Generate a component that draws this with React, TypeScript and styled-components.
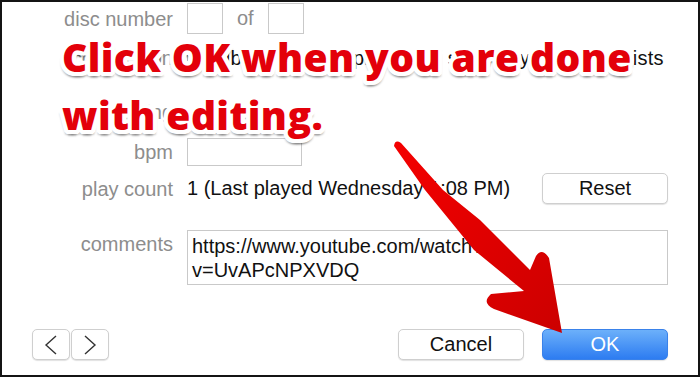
import React from 'react';
import styled, { createGlobalStyle } from 'styled-components';

const GlobalStyle = createGlobalStyle`
  html, body {
    margin: 0;
    padding: 0;
    background: #fff;
  }
  body {
    font-family: 'Liberation Sans', Arial, sans-serif;
    font-size: 20px;
    color: #111;
  }
`;

const Frame = styled.div`
  position: relative;
  box-sizing: border-box;
  width: 700px;
  height: 377px;
  border: 2px solid #141414;
  background: #fff;
  overflow: hidden;
`;

const Form = styled.div`
  display: flex;
  flex-direction: column;
  padding-right: 30px;
`;

const Row = styled.div<{ top: number; h: number; alignTop?: boolean }>`
  display: grid;
  grid-template-columns: 171px 1fr auto;
  column-gap: 14px;
  align-items: ${(p) => (p.alignTop ? 'start' : 'center')};
  height: ${(p) => p.h}px;
  margin-top: ${(p) => p.top}px;
`;

const Label = styled.div<{ padTop?: number }>`
  text-align: right;
  color: #8d8d8d;
  line-height: 24px;
  padding-top: ${(p) => p.padTop || 0}px;
  white-space: nowrap;
`;

const Value = styled.div`
  display: flex;
  align-items: center;
  gap: 14px;
  white-space: nowrap;
  color: #111;
`;

const Note = styled.span`
  letter-spacing: 0.3px;
`;

const Field = styled.div<{ w: number; h: number }>`
  box-sizing: border-box;
  width: ${(p) => p.w}px;
  height: ${(p) => p.h}px;
  border: 1px solid #c9c9c9;
  background: #fff;
`;

const Of = styled.span`
  color: #8d8d8d;
`;

const Check = styled.span`
  box-sizing: border-box;
  width: 16px;
  height: 16px;
  border: 1px solid #b0b0b0;
  border-radius: 3px;
  margin-right: -5px;
`;

const TextBox = styled.div`
  box-sizing: border-box;
  height: 55px;
  border: 1px solid #c9c9c9;
  padding: 3px 0 0 4px;
  line-height: 24px;
  grid-column: 2 / 4;
`;

const Button = styled.button<{ primary?: boolean; w?: number }>`
  box-sizing: border-box;
  width: ${(p) => p.w || 126}px;
  height: 31px;
  border-radius: 5px;
  font-family: 'Liberation Sans', Arial, sans-serif;
  font-size: 20px;
  padding: 0;
  display: flex;
  align-items: center;
  justify-content: center;
  color: ${(p) => (p.primary ? '#fff' : '#111')};
  border: 1px solid ${(p) => (p.primary ? '#3a82ea' : '#cfcfcf')};
  background: ${(p) =>
    p.primary ? 'linear-gradient(#6cb0fa, #2d7cf1)' : '#fff'};
  box-shadow: 0 1px 1px rgba(0, 0, 0, 0.12);
`;

const Footer = styled.div`
  display: flex;
  justify-content: space-between;
  align-items: center;
  margin-top: 44px;
  padding: 0 30px;
`;

const Group = styled.div<{ gap: number }>`
  display: flex;
  gap: ${(p) => p.gap}px;
`;

const Annotation = styled.div`
  position: absolute;
  left: 60px;
  top: 26px;
  font-family: 'Open Sans', sans-serif;
  font-weight: 800;
  font-size: 39px;
  line-height: 58px;
  letter-spacing: 0.4px;
  color: #e3000a;
  white-space: nowrap;
  text-shadow: 4px 0 0 #fff, -4px 0 0 #fff, 0 4px 0 #fff, 0 -4px 0 #fff,
    3px 3px 0 #fff, -3px 3px 0 #fff, 3px -3px 0 #fff, -3px -3px 0 #fff,
    4px 2px 0 #fff, -4px 2px 0 #fff, 4px -2px 0 #fff, -4px -2px 0 #fff,
    2px 4px 0 #fff, -2px 4px 0 #fff, 2px -4px 0 #fff, -2px -4px 0 #fff,
    0 6px 2px rgba(0, 0, 0, 0.25), 3px 5px 2px rgba(0, 0, 0, 0.2),
    -3px 5px 2px rgba(0, 0, 0, 0.2);
`;

const Overlay = styled.svg`
  position: absolute;
  left: -2px;
  top: -2px;
  pointer-events: none;
`;

const Chevron = ({ dir }: { dir: 'left' | 'right' }) => (
  <svg width="14" height="22" viewBox="0 0 14 22">
    <polyline
      points={dir === 'left' ? '12,2 2,11 12,20' : '2,2 12,11 2,20'}
      fill="none"
      stroke="#333"
      strokeWidth="1.4"
    />
  </svg>
);

export default function App() {
  return (
    <>
      <GlobalStyle />
      <Frame>
        <Form>
          <Row top={1} h={31}>
            <Label>disc number</Label>
            <Value>
              <Field w={36} h={31} />
              <Of>of</Of>
              <Field w={36} h={31} />
            </Value>
          </Row>
          <Row top={10} h={28}>
            <Label>compilation</Label>
            <Value>
              <Check />
              <Note>Album is a compilation of songs by various artists</Note>
            </Value>
          </Row>
          <Row top={26} h={28}>
            <Label>rating</Label>
            <Value />
          </Row>
          <Row top={12} h={28}>
            <Label>bpm</Label>
            <Value>
              <Field w={115} h={28} />
            </Value>
          </Row>
          <Row top={7} h={31}>
            <Label>play count</Label>
            <Value>1 (Last played Wednesday 1:08 PM)</Value>
            <Button>Reset</Button>
          </Row>
          <Row top={26} h={55} alignTop>
            <Label padTop={2}>comments</Label>
            <TextBox>
              https://www.youtube.com/watch?
              <br />
              v=UvAPcNPXVDQ
            </TextBox>
          </Row>
        </Form>
        <Footer>
          <Group gap={1}>
            <Button w={38}>
              <Chevron dir="left" />
            </Button>
            <Button w={38}>
              <Chevron dir="right" />
            </Button>
          </Group>
          <Group gap={18}>
            <Button>Cancel</Button>
            <Button primary>OK</Button>
          </Group>
        </Footer>
        <Annotation>
          Click OK when you are done
          <br />
          with editing.
        </Annotation>
        <Overlay width="700" height="378" viewBox="0 0 700 378">
          <defs>
            <linearGradient id="arrowFill" x1="0" y1="0" x2="1" y2="1">
              <stop offset="0" stopColor="#f40000" />
              <stop offset="1" stopColor="#cc0000" />
            </linearGradient>
          </defs>
          <path
            d="M 394 146 Q 395 139 401 143 L 443 190 L 480 220 L 530 270 L 536 256 Q 542 247 549 258 L 562 333 L 494 309 Q 481 303 491 294 L 524 291 L 474 250 L 425 190 Z"
            fill="url(#arrowFill)"
          />
        </Overlay>
      </Frame>
    </>
  );
}
